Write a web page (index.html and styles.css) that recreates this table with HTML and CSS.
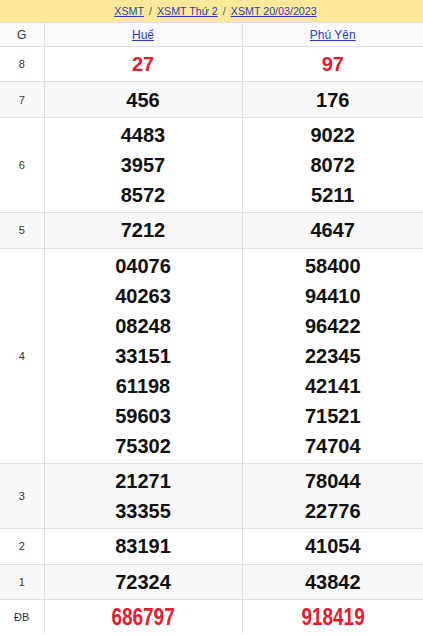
FILE: index.html
```html
<!DOCTYPE html>
<html lang="vi">
<head>
<meta charset="utf-8">
<title>XSMT 20/03/2023</title>
<link rel="stylesheet" href="styles.css">
</head>
<body>
<div class="crumbs">
  <a href="#">XSMT</a><span class="sep">/</span><a href="#">XSMT Thứ 2</a><span class="sep">/</span><a href="#">XSMT 20/03/2023</a>
</div>
<table class="kq">
  <colgroup><col class="c-g"><col class="c-a"><col class="c-b"></colgroup>
  <tr class="head"><td class="lbl lbl-g">G</td><td class="prov"><a href="#">Huế</a></td><td class="prov"><a href="#">Phú Yên</a></td></tr>
  <tr><td class="lbl">8</td><td class="num red">27</td><td class="num red">97</td></tr>
  <tr class="alt"><td class="lbl">7</td><td class="num">456</td><td class="num">176</td></tr>
  <tr><td class="lbl">6</td><td class="num">4483<br>3957<br>8572</td><td class="num">9022<br>8072<br>5211</td></tr>
  <tr class="alt"><td class="lbl">5</td><td class="num">7212</td><td class="num">4647</td></tr>
  <tr><td class="lbl">4</td><td class="num">04076<br>40263<br>08248<br>33151<br>61198<br>59603<br>75302</td><td class="num">58400<br>94410<br>96422<br>22345<br>42141<br>71521<br>74704</td></tr>
  <tr class="alt"><td class="lbl">3</td><td class="num">21271<br>33355</td><td class="num">78044<br>22776</td></tr>
  <tr><td class="lbl">2</td><td class="num">83191</td><td class="num">41054</td></tr>
  <tr class="alt"><td class="lbl">1</td><td class="num">72324</td><td class="num">43842</td></tr>
  <tr><td class="lbl">ĐB</td><td class="num db"><span class="narrow">686797</span></td><td class="num db"><span class="narrow">918419</span></td></tr>
</table>
</body>
</html>
```
FILE: styles.css
```css
html, body {
  margin: 0;
  padding: 0;
  background: #fff;
  font-family: "Liberation Sans", Arial, sans-serif;
}
.crumbs {
  height: 22px;
  background: #fee99a;
  display: flex;
  justify-content: center;
  align-items: center;
  font-size: 10.7px;
  line-height: 22px;
  padding-left: 8px;
}
.crumbs a {
  color: #2a3fb5;
  text-decoration: underline;
}
.crumbs .sep {
  color: #555;
  padding: 0 5px;
}
.kq {
  width: 423px;
  border-collapse: collapse;
  table-layout: fixed;
}
.c-g { width: 44px; }
.c-a { width: 198px; }
.c-b { width: 181px; }
.kq td {
  border: 1px solid #dfdfe4;
  text-align: center;
  vertical-align: middle;
  padding: 2.2px 0;
}
.kq tr td:first-child { border-left: 0; }
.kq tr td:last-child { border-right: 0; }
.kq tr:last-child td { border-bottom: 0; }
.kq tr.head td {
  background: #f9f9f9;
  height: 23px;
  padding: 0;
}
.kq tr.alt td { background: #f8f8f8; }
.lbl {
  font-size: 11px;
  color: #333;
}
.lbl-g { font-size: 12px; }
.prov {
  font-size: 12px;
}
.prov a {
  color: #2a3fb5;
  text-decoration: underline;
}
.num {
  font-size: 20px;
  font-weight: bold;
  line-height: 30px;
  color: #111;
}
.num.red { color: #e8192c; }
.num.db {
  color: #e8192c;
  font-size: 24px;
}
.narrow {
  display: inline-block;
  transform: scaleX(0.79);
}
```
